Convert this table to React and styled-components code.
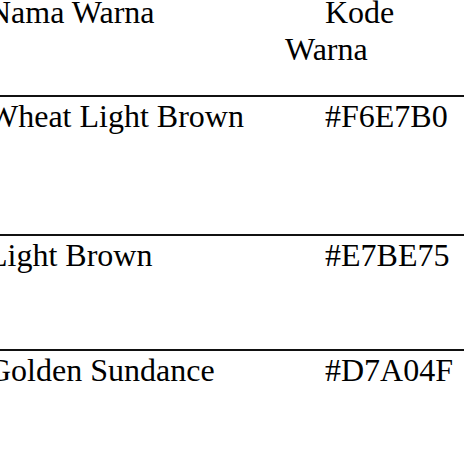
import React from "react";
import styled, { createGlobalStyle } from "styled-components";

const Global = createGlobalStyle`
  html, body {
    margin: 0;
    padding: 0;
    background: #ffffff;
    overflow: hidden;
  }
  body {
    width: 464px;
    height: 464px;
    font-family: "Liberation Serif", "Times New Roman", serif;
    color: #000000;
  }
`;

const Table = styled.div`
  margin: -6px 0 0 -12px;
  width: calc(100% + 12px);
  font-family: "Liberation Serif", "Times New Roman", serif;
  font-size: 32px;
  line-height: 37px;
  color: #000;
`;

const Row = styled.div`
  display: grid;
  grid-template-columns: 297px 1fr;
  height: ${(p) => p.$height}px;
  border-top: ${(p) => (p.$ruled ? "2px solid #111" : "none")};
  padding-top: ${(p) => (p.$ruled ? 1 : 0)}px;
  box-sizing: border-box;
`;

const NameCell = styled.div`
  white-space: nowrap;
`;

const CodeCell = styled.div`
  text-indent: 40px;
  width: 110px;
`;

const rows = [
  { name: "Wheat Light Brown", code: "#F6E7B0", height: 139 },
  { name: "Light Brown", code: "#E7BE75", height: 115 },
  { name: "Golden Sundance", code: "#D7A04F", height: 115 },
];

export default function App() {
  return (
    <>
      <Global />
      <Table>
        <Row $height={101}>
          <NameCell>Nama Warna</NameCell>
          <CodeCell>Kode Warna</CodeCell>
        </Row>
        {rows.map((r) => (
          <Row key={r.code} $ruled $height={r.height}>
            <NameCell>{r.name}</NameCell>
            <CodeCell>{r.code}</CodeCell>
          </Row>
        ))}
      </Table>
    </>
  );
}
